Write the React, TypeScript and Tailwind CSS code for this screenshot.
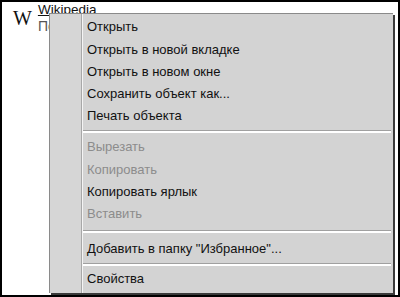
import React from "react";

type Item = { label: string; disabled?: boolean; h: number } | { sep: true; h: number };

const items: Item[] = [
  { label: "Открыть", h: 22 },
  { label: "Открыть в новой вкладке", h: 23 },
  { label: "Открыть в новом окне", h: 22 },
  { label: "Сохранить объект как...", h: 22 },
  { label: "Печать объекта", h: 22 },
  { sep: true, h: 9 },
  { label: "Вырезать", disabled: true, h: 22 },
  { label: "Копировать", disabled: true, h: 23 },
  { label: "Копировать ярлык", h: 22 },
  { label: "Вставить", disabled: true, h: 22 },
  { sep: true, h: 13 },
  { label: 'Добавить в папку "Избранное"...', h: 22 },
  { sep: true, h: 8 },
  { label: "Свойства", h: 22 },
];

export default function App() {
  return (
    <div
      className="relative w-[400px] h-[297px] bg-white border-2 border-black overflow-hidden"
      style={{ fontFamily: '"Liberation Sans", Arial, sans-serif' }}
    >
      <div className="flex gap-[6px] pl-[11px] pt-[1px]">
        <div
          className="text-[20px] leading-[20px] text-[#111] mt-[5px]"
          style={{ fontFamily: '"Liberation Serif", serif' }}
        >
          W
        </div>
        <div className="flex flex-col">
          <span className="text-[13.5px] leading-[13px] text-[#111] underline">Wikipedia</span>
          <span className="whitespace-nowrap text-[14px] leading-[18px] text-[#555] mt-[1px]">
            По
          </span>
        </div>
      </div>

      <div className="absolute left-[47px] top-[11px] w-[344px] h-[280px] bg-[#d3d3d3] border-l border-t border-[#8a8a8a] flex shadow-[2px_2px_0_#3a3a3a]">
        <div className="w-[32px] h-full bg-[#d6d6d6] border-r border-[#a8a8a8] shadow-[1px_0_0_#f4f4f4]"></div>
        <div className="flex-1 flex flex-col pt-[2px] pr-[2px]">
          {items.map((it, i) =>
            "sep" in it ? (
              <div key={i} className="flex items-center pl-[1px]" style={{ height: it.h }}>
                <div className="w-full h-[3px] border-t border-[#a0a0a0] border-b-2 border-b-white"></div>
              </div>
            ) : (
              <div
                key={i}
                className={`flex items-center pl-[5px] text-[13px] ${
                  it.disabled ? "text-[#8c8c8c]" : "text-[#111]"
                }`}
                style={{ height: it.h }}
              >
                {it.label}
              </div>
            )
          )}
        </div>
      </div>
    </div>
  );
}
